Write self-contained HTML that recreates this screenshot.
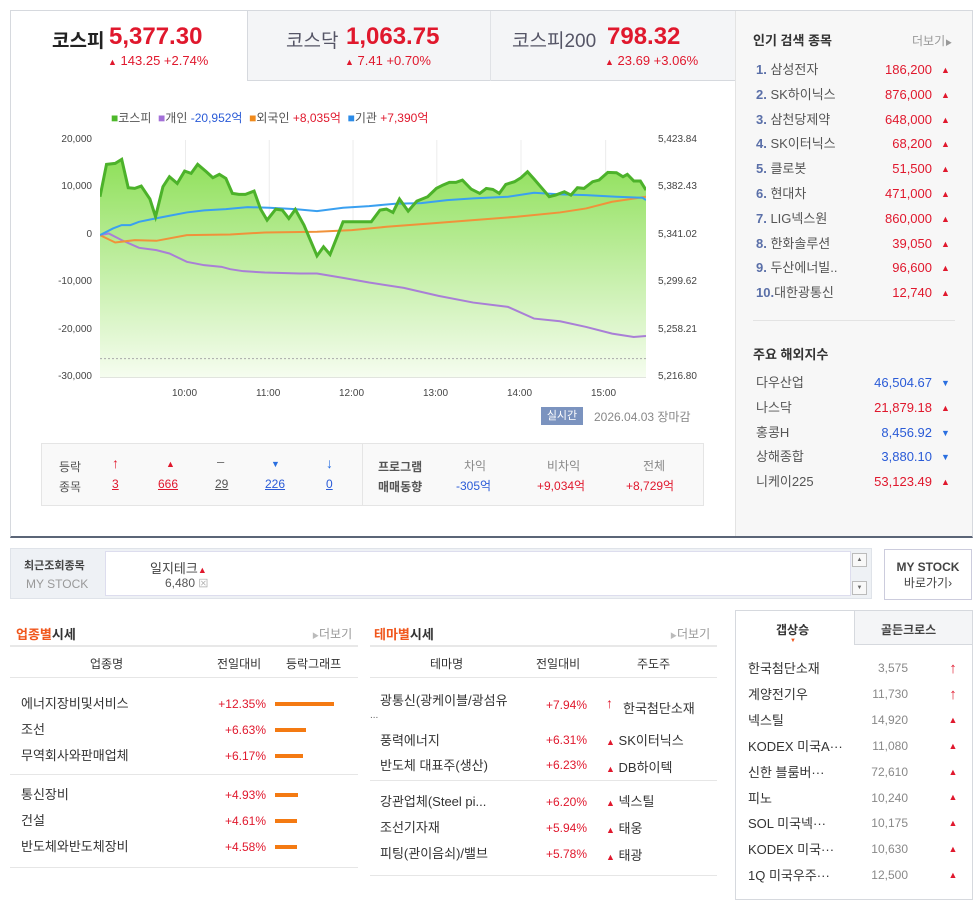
<!DOCTYPE html>
<html><head><meta charset="utf-8">
<style>
*{margin:0;padding:0;box-sizing:border-box}
body{width:978px;height:887px;background:#fff;font-family:"Liberation Sans","Noto Sans CJK KR",sans-serif;position:relative;overflow:hidden;color:#333}
.a{position:absolute;white-space:nowrap}
.red{color:#e0182d}.blue{color:#2a5bd7}
.up{color:#e0182d;font-size:9px}
.dn{color:#2a6fe0;font-size:9px}
.s12{font-size:12px}.s13{font-size:13px}
.ar div{height:25.9px;line-height:25.9px;text-align:center;width:14px}
</style></head><body>
<div class="a" style="left:10px;top:10px;width:963px;height:528px;border:1px solid #d6d9de;border-bottom:2px solid #5b6577"></div>
<div class="a" style="left:735px;top:11px;width:237px;height:525px;background:#f7f7f7;border-left:1px solid #e3e3e3"></div>
<div class="a" style="left:247px;top:11px;width:488px;height:70px;background:#f4f5f7;border-left:1px solid #d6d9de;border-bottom:1px solid #d6d9de"></div>
<div class="a" style="left:490px;top:11px;width:1px;height:70px;background:#e0e2e6"></div>
<div class="a" style="left:52px;top:26px;font-size:19px;font-weight:bold;color:#222">코스피</div>
<div class="a red" style="left:109px;top:23px;font-size:24px;font-weight:bold">5,377.30</div>
<div class="a red s13" style="left:108px;top:53px"><span class="up">▲</span> 143.25 +2.74%</div>
<div class="a" style="left:286px;top:26px;font-size:19px;color:#556">코스닥</div>
<div class="a red" style="left:346px;top:23px;font-size:24px;font-weight:bold">1,063.75</div>
<div class="a red s13" style="left:345px;top:53px"><span class="up">▲</span> 7.41 +0.70%</div>
<div class="a" style="left:512px;top:26px;font-size:19px;color:#556">코스피200</div>
<div class="a red" style="left:607px;top:23px;font-size:24px;font-weight:bold">798.32</div>
<div class="a red s13" style="left:605px;top:53px"><span class="up">▲</span> 23.69 +3.06%</div>

<div class="a s12" style="left:111px;top:109px;color:#555"><span style="color:#4db82a">■</span>코스피 &nbsp;<span style="color:#a370d8">■</span>개인 <span class="blue">-20,952억</span> &nbsp;<span style="color:#f08a1c">■</span>외국인 <span class="red">+8,035억</span> &nbsp;<span style="color:#2b8be8">■</span>기관 <span class="red">+7,390억</span></div>
<div class="a" style="left:40px;top:134px;width:52px;text-align:right;font-size:10px;color:#444">20,000</div>
<div class="a" style="left:40px;top:181px;width:52px;text-align:right;font-size:10px;color:#444">10,000</div>
<div class="a" style="left:40px;top:229px;width:52px;text-align:right;font-size:10px;color:#444">0</div>
<div class="a" style="left:40px;top:276px;width:52px;text-align:right;font-size:10px;color:#444">-10,000</div>
<div class="a" style="left:40px;top:324px;width:52px;text-align:right;font-size:10px;color:#444">-20,000</div>
<div class="a" style="left:40px;top:371px;width:52px;text-align:right;font-size:10px;color:#444">-30,000</div>
<div class="a" style="left:658px;top:134px;font-size:10px;color:#444">5,423.84</div>
<div class="a" style="left:658px;top:181px;font-size:10px;color:#444">5,382.43</div>
<div class="a" style="left:658px;top:229px;font-size:10px;color:#444">5,341.02</div>
<div class="a" style="left:658px;top:276px;font-size:10px;color:#444">5,299.62</div>
<div class="a" style="left:658px;top:324px;font-size:10px;color:#444">5,258.21</div>
<div class="a" style="left:658px;top:371px;font-size:10px;color:#444">5,216.80</div>
<div class="a" style="left:172px;top:388px;font-size:10px;color:#444">10:00</div>
<div class="a" style="left:256px;top:388px;font-size:10px;color:#444">11:00</div>
<div class="a" style="left:339px;top:388px;font-size:10px;color:#444">12:00</div>
<div class="a" style="left:423px;top:388px;font-size:10px;color:#444">13:00</div>
<div class="a" style="left:507px;top:388px;font-size:10px;color:#444">14:00</div>
<div class="a" style="left:591px;top:388px;font-size:10px;color:#444">15:00</div>
<svg class="a" style="left:100px;top:140px" width="546" height="238" viewBox="140 45 1258 713" preserveAspectRatio="none">
<defs><linearGradient id="g" x1="0" y1="0" x2="0" y2="1"><stop offset="0" stop-color="#8fe05a"/><stop offset="1" stop-color="#f6fdf0"/></linearGradient></defs>
<g stroke="#ececec"><line x1="337" y1="45" x2="337" y2="758" vector-effect="non-scaling-stroke"/><line x1="530" y1="45" x2="530" y2="758" vector-effect="non-scaling-stroke"/><line x1="723" y1="45" x2="723" y2="758" vector-effect="non-scaling-stroke"/><line x1="916" y1="45" x2="916" y2="758" vector-effect="non-scaling-stroke"/><line x1="1110" y1="45" x2="1110" y2="758" vector-effect="non-scaling-stroke"/><line x1="1305" y1="45" x2="1305" y2="758" vector-effect="non-scaling-stroke"/></g>
<path d="M140,215 155,118 175,115 190,103 205,188 220,190 235,183 255,222 268,275 285,185 300,155 318,175 335,138 350,145 365,118 385,140 400,158 415,148 430,160 445,205 460,208 475,208 495,198 510,252 525,285 545,252 560,255 575,280 590,253 610,300 640,392 655,365 670,388 700,290 720,290 765,290 785,255 800,252 815,262 830,222 850,258 870,228 895,215 915,190 930,180 945,172 960,172 975,165 995,192 1015,205 1030,190 1045,193 1060,205 1075,178 1095,170 1110,158 1125,140 1140,162 1160,192 1175,215 1190,210 1210,200 1225,210 1240,188 1255,190 1275,170 1290,165 1310,142 1330,143 1345,155 1355,148 1370,168 1385,168 1398,195 L1398,758 L140,758Z" fill="url(#g)"/>
<line x1="140" y1="700" x2="1398" y2="700" stroke="#aaa" stroke-dasharray="2 2" vector-effect="non-scaling-stroke"/>
<line x1="140" y1="758" x2="1398" y2="758" stroke="#ccc" vector-effect="non-scaling-stroke"/>
<polyline fill="none" stroke="#a97fd6" stroke-width="2" vector-effect="non-scaling-stroke" points="140,330 160,325 190,345 230,368 270,375 300,385 340,410 380,420 420,425 440,432 470,438 520,442 600,445 640,445 700,458 760,472 840,488 920,512 1000,532 1080,545 1140,580 1200,588 1260,605 1320,625 1370,635 1398,632"/>
<polyline fill="none" stroke="#f0923a" stroke-width="2" vector-effect="non-scaling-stroke" points="140,330 175,352 220,345 270,347 340,330 440,328 520,322 640,320 720,315 800,305 900,295 1000,285 1100,275 1200,262 1260,250 1320,230 1398,215"/>
<polyline fill="none" stroke="#3aa0f0" stroke-width="2" vector-effect="non-scaling-stroke" points="140,330 170,310 190,300 210,300 230,290 260,282 300,272 340,262 380,256 430,252 480,246 530,248 590,252 640,258 700,248 760,243 820,236 880,234 940,225 1000,220 1080,215 1140,203 1200,208 1260,210 1330,215 1390,218 1398,225"/>
<polyline fill="none" stroke="#4cb22a" stroke-width="3" vector-effect="non-scaling-stroke" points="140,215 155,118 175,115 190,103 205,188 220,190 235,183 255,222 268,275 285,185 300,155 318,175 335,138 350,145 365,118 385,140 400,158 415,148 430,160 445,205 460,208 475,208 495,198 510,252 525,285 545,252 560,255 575,280 590,253 610,300 640,392 655,365 670,388 700,290 720,290 765,290 785,255 800,252 815,262 830,222 850,258 870,228 895,215 915,190 930,180 945,172 960,172 975,165 995,192 1015,205 1030,190 1045,193 1060,205 1075,178 1095,170 1110,158 1125,140 1140,162 1160,192 1175,215 1190,210 1210,200 1225,210 1240,188 1255,190 1275,170 1290,165 1310,142 1330,143 1345,155 1355,148 1370,168 1385,168 1398,195"/>
</svg>
<div class="a" style="left:541px;top:407px;width:42px;height:18px;background:#7b93bf;color:#fff;font-size:11px;line-height:18px;text-align:center">실시간</div>
<div class="a s12" style="left:594px;top:408px;color:#888">2026.04.03 장마감</div>

<div class="a" style="left:41px;top:443px;width:663px;height:63px;background:#f9f9f9;border:1px solid #e5e5e5"></div>
<div class="a" style="left:362px;top:444px;width:1px;height:61px;background:#e5e5e5"></div>
<div class="a s12" style="left:59px;top:457px;color:#555;line-height:20px">등락<br>종목</div>
<div class="a" style="left:112px;top:455px;color:#e0182d;font-size:14px;font-weight:bold">↑</div>
<div class="a up" style="left:166px;top:459px">▲</div>
<div class="a" style="left:217px;top:454px;color:#666;font-size:13px">–</div>
<div class="a dn" style="left:271px;top:459px">▼</div>
<div class="a" style="left:326px;top:455px;color:#2a6fe0;font-size:14px;font-weight:bold">↓</div>
<div class="a s12 red" style="left:112px;top:477px;text-decoration:underline">3</div>
<div class="a s12 red" style="left:158px;top:477px;text-decoration:underline">666</div>
<div class="a s12" style="left:215px;top:477px;text-decoration:underline;color:#555">29</div>
<div class="a s12 blue" style="left:265px;top:477px;text-decoration:underline">226</div>
<div class="a s12 blue" style="left:326px;top:477px;text-decoration:underline">0</div>
<div class="a s12" style="left:378px;top:457px;color:#555;font-weight:bold;line-height:20px">프로그램<br>매매동향</div>
<div class="a s12" style="left:464px;top:457px;color:#888">차익</div>
<div class="a s12 blue" style="left:456px;top:477px">-305억</div>
<div class="a s12" style="left:547px;top:457px;color:#888">비차익</div>
<div class="a s12 red" style="left:537px;top:477px">+9,034억</div>
<div class="a s12" style="left:643px;top:457px;color:#888">전체</div>
<div class="a s12 red" style="left:626px;top:477px">+8,729억</div>

<div class="a" style="left:753px;top:30px;font-size:13px;font-weight:bold;color:#333">인기 검색 종목</div>
<div class="a s12" style="left:912px;top:32px;color:#999">더보기<span style="font-size:7px">▶</span></div>
<div class="a" style="left:756px;top:58px;font-size:13px;line-height:24.8px;color:#555">
<div><b style="color:#5a6fa8">1.</b> 삼성전자</div><div><b style="color:#5a6fa8">2.</b> SK하이닉스</div><div><b style="color:#5a6fa8">3.</b> 삼천당제약</div><div><b style="color:#5a6fa8">4.</b> SK이터닉스</div><div><b style="color:#5a6fa8">5.</b> 클로봇</div><div><b style="color:#5a6fa8">6.</b> 현대차</div><div><b style="color:#5a6fa8">7.</b> LIG넥스원</div><div><b style="color:#5a6fa8">8.</b> 한화솔루션</div><div><b style="color:#5a6fa8">9.</b> 두산에너빌..</div><div><b style="color:#5a6fa8">10.</b>대한광통신</div></div>
<div class="a red" style="left:850px;top:58px;width:82px;text-align:right;font-size:13px;line-height:24.8px">186,200<br>876,000<br>648,000<br>68,200<br>51,500<br>471,000<br>860,000<br>39,050<br>96,600<br>12,740</div>
<div class="a up" style="left:941px;top:58px;line-height:24.8px">▲<br>▲<br>▲<br>▲<br>▲<br>▲<br>▲<br>▲<br>▲<br>▲</div>
<div class="a" style="left:753px;top:320px;width:202px;height:1px;background:#e3e3e3"></div>
<div class="a" style="left:753px;top:344px;font-size:13px;font-weight:bold;color:#333">주요 해외지수</div>
<div class="a" style="left:756px;top:371px;font-size:13px;line-height:24.8px;color:#555">다우산업<br>나스닥<br>홍콩H<br>상해종합<br>니케이225</div>
<div class="a" style="left:840px;top:371px;width:92px;text-align:right;font-size:13px;line-height:24.8px"><span class="blue">46,504.67</span><br><span class="red">21,879.18</span><br><span class="blue">8,456.92</span><br><span class="blue">3,880.10</span><br><span class="red">53,123.49</span></div>
<div class="a" style="left:941px;top:371px;font-size:9px;line-height:24.8px"><span style="color:#2a6fe0">▼</span><br><span style="color:#e0182d">▲</span><br><span style="color:#2a6fe0">▼</span><br><span style="color:#2a6fe0">▼</span><br><span style="color:#e0182d">▲</span></div>

<div class="a" style="left:10px;top:548px;width:862px;height:51px;background:#eef1f5;border:1px solid #dfe3e9"></div>
<div class="a" style="left:24px;top:557px;font-size:11px;font-weight:bold;color:#444">최근조회종목</div>
<div class="a" style="left:26px;top:577px;font-size:12px;color:#999">MY STOCK</div>
<div class="a" style="left:105px;top:551px;width:746px;height:45px;background:#fff;border:1px solid #dde"></div>
<div class="a s13" style="left:150px;top:558px;color:#444">일지테크<span class="up">▲</span></div>
<div class="a s12" style="left:165px;top:575px;color:#555">6,480 <span style="color:#aaa;font-size:10px">⊠</span></div>
<div class="a" style="left:852px;top:553px;width:15px;height:14px;border:1px solid #bbb;background:#f8f8f8;font-size:6px;text-align:center;line-height:12px;color:#666">▲</div>
<div class="a" style="left:852px;top:581px;width:15px;height:14px;border:1px solid #bbb;background:#f8f8f8;font-size:6px;text-align:center;line-height:12px;color:#666">▼</div>
<div class="a" style="left:884px;top:549px;width:88px;height:51px;border:1px solid #ccd;background:#fff;text-align:center;font-size:12px;font-weight:bold;color:#444;line-height:16px;padding-top:9px">MY STOCK<br><span style="font-weight:normal">바로가기›</span></div>

<div class="a" style="left:16px;top:624px;font-size:13px;font-weight:bold"><span style="color:#f0561c">업종별</span>시세</div>
<div class="a s12" style="left:312px;top:625px;color:#999"><span style="font-size:7px;color:#bbb">▶</span>더보기</div>
<div class="a" style="left:10px;top:645px;width:348px;height:2px;background:#e8e8e8"></div>
<div class="a s12" style="left:90px;top:655px;color:#333">업종명</div>
<div class="a s12" style="left:217px;top:655px;color:#333">전일대비</div>
<div class="a s12" style="left:286px;top:655px;color:#333">등락그래프</div>
<div class="a" style="left:10px;top:677px;width:348px;height:1px;background:#e6e6e6"></div>
<div class="a s13" style="left:21px;top:691px;line-height:26px;color:#333">에너지장비및서비스<br>조선<br>무역회사와판매업체</div>
<div class="a" style="left:200px;top:691px;width:66px;text-align:right;line-height:26px;font-size:12px;color:#e0182d">+12.35%<br>+6.63%<br>+6.17%</div>
<div class="a" style="left:275px;top:702px;width:59px;height:4px;background:#f47a12"></div>
<div class="a" style="left:275px;top:728px;width:31px;height:4px;background:#f47a12"></div>
<div class="a" style="left:275px;top:754px;width:28px;height:4px;background:#f47a12"></div>
<div class="a" style="left:10px;top:774px;width:348px;height:1px;background:#e6e6e6"></div>
<div class="a s13" style="left:21px;top:782px;line-height:26px;color:#333">통신장비<br>건설<br>반도체와반도체장비</div>
<div class="a" style="left:200px;top:782px;width:66px;text-align:right;line-height:26px;font-size:12px;color:#e0182d">+4.93%<br>+4.61%<br>+4.58%</div>
<div class="a" style="left:275px;top:793px;width:23px;height:4px;background:#f47a12"></div>
<div class="a" style="left:275px;top:819px;width:22px;height:4px;background:#f47a12"></div>
<div class="a" style="left:275px;top:845px;width:22px;height:4px;background:#f47a12"></div>
<div class="a" style="left:10px;top:867px;width:348px;height:1px;background:#e6e6e6"></div>

<div class="a" style="left:374px;top:624px;font-size:13px;font-weight:bold"><span style="color:#f0561c">테마별</span>시세</div>
<div class="a s12" style="left:670px;top:625px;color:#999"><span style="font-size:7px;color:#bbb">▶</span>더보기</div>
<div class="a" style="left:370px;top:645px;width:347px;height:2px;background:#e8e8e8"></div>
<div class="a s12" style="left:430px;top:655px;color:#333">테마명</div>
<div class="a s12" style="left:536px;top:655px;color:#333">전일대비</div>
<div class="a s12" style="left:637px;top:655px;color:#333">주도주</div>
<div class="a" style="left:370px;top:677px;width:347px;height:1px;background:#e6e6e6"></div>
<div class="a s13" style="left:380px;top:690px;color:#333">광통신(광케이블/광섬유</div>
<div class="a" style="left:370px;top:710px;font-size:10px;color:#666">...</div>
<div class="a s13" style="left:380px;top:728px;line-height:25px;color:#333">풍력에너지<br>반도체 대표주(생산)</div>
<div class="a" style="left:530px;top:698px;width:57px;text-align:right;font-size:12px;color:#e0182d">+7.94%</div>
<div class="a" style="left:530px;top:728px;width:57px;text-align:right;font-size:12px;color:#e0182d;line-height:25px">+6.31%<br>+6.23%</div>
<div class="a" style="left:606px;top:695px;color:#e0182d;font-size:14px;font-weight:bold">↑</div>
<div class="a s13" style="left:623px;top:698px;color:#333">한국첨단소재</div>
<div class="a" style="left:606px;top:728px;line-height:25px;font-size:13px;color:#333"><span class="up">▲</span> SK이터닉스<br><span class="up">▲</span> DB하이텍</div>
<div class="a" style="left:370px;top:780px;width:347px;height:1px;background:#e6e6e6"></div>
<div class="a s13" style="left:380px;top:789px;line-height:26px;color:#333">강관업체(Steel pi...<br>조선기자재<br>피팅(관이음쇠)/밸브</div>
<div class="a" style="left:530px;top:789px;width:57px;text-align:right;font-size:12px;color:#e0182d;line-height:26px">+6.20%<br>+5.94%<br>+5.78%</div>
<div class="a" style="left:606px;top:789px;line-height:26px;font-size:13px;color:#333"><span class="up">▲</span> 넥스틸<br><span class="up">▲</span> 태웅<br><span class="up">▲</span> 태광</div>
<div class="a" style="left:370px;top:875px;width:347px;height:1px;background:#e6e6e6"></div>

<div class="a" style="left:735px;top:610px;width:238px;height:290px;border:1px solid #d6d9de"></div>
<div class="a" style="left:854px;top:610px;width:119px;height:35px;background:#f4f5f7;border:1px solid #d6d9de"></div>
<div class="a s12" style="left:776px;top:621px;font-weight:bold;color:#333">갭상승</div>
<div class="a" style="left:790px;top:638px;font-size:6px;color:#f0561c">▼</div>
<div class="a s12" style="left:881px;top:621px;font-weight:bold;color:#444">골든크로스</div>
<div class="a s13" style="left:748px;top:656px;line-height:25.9px;color:#333">한국첨단소재<br>계양전기우<br>넥스틸<br>KODEX 미국A···<br>신한 블룸버···<br>피노<br>SOL 미국넥···<br>KODEX 미국···<br>1Q 미국우주···</div>
<div class="a" style="left:860px;top:656px;width:48px;text-align:right;font-size:12px;line-height:25.9px;color:#888">3,575<br>11,730<br>14,920<br>11,080<br>72,610<br>10,240<br>10,175<br>10,630<br>12,500</div>
<div class="a ar" style="left:946px;top:656px;color:#e0182d">
<div style="font-size:15px;font-weight:bold">↑</div><div style="font-size:15px;font-weight:bold">↑</div><div style="font-size:9px">▲</div><div style="font-size:9px">▲</div><div style="font-size:9px">▲</div><div style="font-size:9px">▲</div><div style="font-size:9px">▲</div><div style="font-size:9px">▲</div><div style="font-size:9px">▲</div></div>
</body></html>
